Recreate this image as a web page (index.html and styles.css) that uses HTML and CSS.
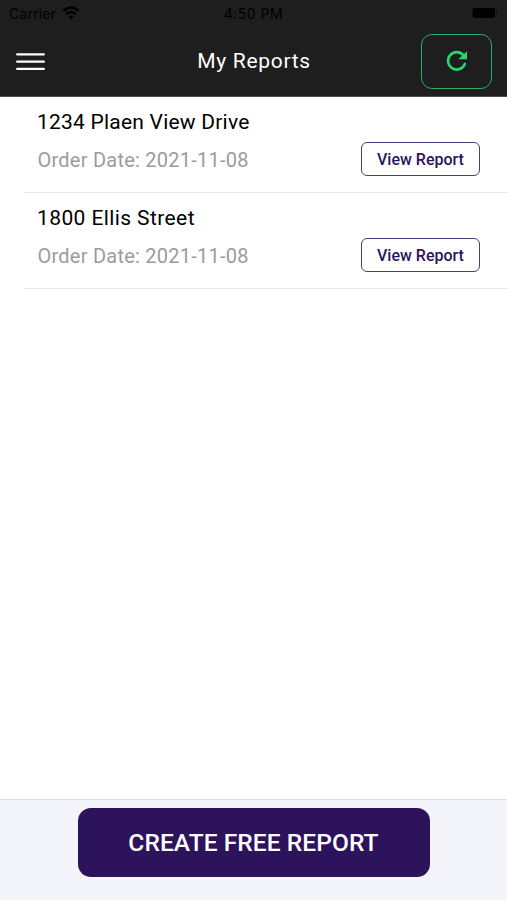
FILE: index.html
```html
<!DOCTYPE html>
<html lang="en">
<head>
<meta charset="utf-8">
<title>My Reports</title>
<link rel="stylesheet" href="styles.css">
</head>
<body>
<header class="header">
  <div class="status">
    <div class="carrier"><span class="carrier-name">Carrier</span>
      <svg class="wifi" viewBox="0 0 18 14"><path d="M9 13.5 11.8 10.6Q9 8.4 6.2 10.6Z"/><path class="arc" d="M1.2 5Q9-2 16.8 5M4 8.2Q9 3.8 14 8.2"/></svg>
    </div>
    <time class="time">4:50 PM</time>
    <svg class="battery" viewBox="0 0 26 12"><rect x=".5" y="1" width="22.5" height="10" rx="2.5"/><path d="M24 4q2 2 0 4z"/></svg>
  </div>
  <div class="toolbar">
    <button class="menu" aria-label="Menu"><svg viewBox="0 0 29 20"><path d="M1.2 2.4h26.6M1.2 9.7h26.6M1.2 16.9h26.6"/></svg></button>
    <h1 class="title">My Reports</h1>
    <button class="refresh" aria-label="Refresh"><svg viewBox="0 0 22 22"><path class="ring" d="M17.3 5.1A8.7 8.7 0 1 0 18.9 13.9"/><path class="head" d="M21 1.2V9.3H12.4Z"/></svg></button>
  </div>
</header>
<main class="list">
  <article class="item">
    <h2 class="address">1234 Plaen View Drive</h2>
    <div class="row"><p class="date">Order Date: 2021-11-08</p><button class="view"><span>View Report</span></button></div>
  </article>
  <article class="item">
    <h2 class="address short">1800 Ellis Street</h2>
    <div class="row"><p class="date">Order Date: 2021-11-08</p><button class="view"><span>View Report</span></button></div>
  </article>
</main>
<footer class="footer"><button class="create"><span>CREATE FREE REPORT</span></button></footer>
</body>
</html>
```
FILE: styles.css
```css
* { box-sizing: border-box; }
body { margin: 0; height: 900px; display: flex; flex-direction: column; background: #fff; font-family: Roboto, "Liberation Sans", sans-serif; overflow: hidden; }
button { font: inherit; padding: 0; cursor: pointer; }
h1, h2, p { margin: 0; font-weight: 400; white-space: nowrap; }
.header { height: 97px; background: #1e1e1e; border-bottom: 1px solid #4c4c4c; flex: none; }
.status { height: 26px; display: grid; grid-template-columns: 1fr auto 1fr; align-items: center; padding: 0 9px; font: 14px Inter, sans-serif; color: #000; }
.carrier { display: flex; align-items: center; gap: 6px; }
.carrier-name { letter-spacing: .15px; }
.wifi { width: 18px; height: 14px; }
.arc { fill: none; stroke: #000; stroke-width: 2.6; }
.time { letter-spacing: .5px; }
.battery { width: 26px; height: 12px; justify-self: end; }
.toolbar { height: 70px; padding: 0 15px 0 16px; display: grid; grid-template-columns: 1fr auto 1fr; align-items: center; }
.menu { width: 29px; height: 20px; border: 0; background: none; margin-top: 2px; }
.menu svg { display: block; width: 29px; height: 20px; fill: none; stroke: #fff; stroke-width: 2.3; stroke-linecap: round; }
.title { color: #fff; font-size: 21px; letter-spacing: .7px; }
.refresh { width: 71px; height: 55px; justify-self: end; display: grid; place-items: center; background: #1e1e1e; border: 1px solid #28ad62; border-radius: 11px; }
.refresh svg { width: 22px; height: 22px; }
.ring { fill: none; stroke: #2ad66b; stroke-width: 2.6; stroke-linecap: round; }
.head { fill: #2ad66b; }
.list { flex: 1; padding-left: 25px; }
.item { height: 96px; padding: 11px 27px 0 12px; border-bottom: 1px solid #e6e6e6; }
.address { font-size: 21px; line-height: 28px; letter-spacing: .22px; color: #000; }
.short { letter-spacing: .4px; }
.row { display: flex; justify-content: space-between; align-items: center; height: 34px; margin-top: 6px; }
.date { font-size: 20px; color: #9b9b9f; letter-spacing: .24px; padding: 2px 0 0 .5px; }
.view { width: 119px; height: 34px; border: 1px solid #4b3c80; border-radius: 6px; background: #fff; color: #2d145d; font-size: 16px; font-weight: 500; letter-spacing: 0; white-space: nowrap; }
.footer { height: 101px; padding-top: 8px; display: flex; justify-content: center; align-items: flex-start; background: #f3f5fa; border-top: 1px solid #dedfe3; }
.create { width: 352px; height: 69px; border: 0; border-radius: 13px; background: #2d125c; color: #fff; font-size: 24.5px; font-weight: 500; letter-spacing: .08px; white-space: nowrap; }
```
